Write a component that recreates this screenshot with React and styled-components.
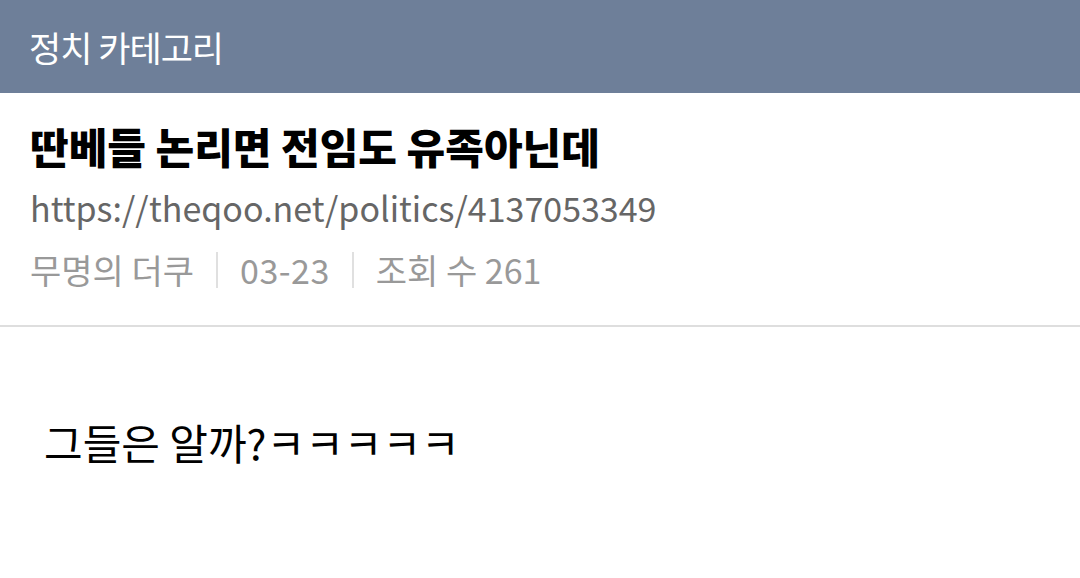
import React from "react";
import styled, { createGlobalStyle } from "styled-components";

const Global = createGlobalStyle`
  html, body { margin: 0; padding: 0; background: #fff; }
  body { font-family: "Noto Sans CJK KR", "Noto Sans", sans-serif; }
`;

const Page = styled.div`
  width: 1080px;
  min-height: 578px;
  background: #fff;
`;

const TopBar = styled.header`
  height: 93px;
  background: #6e7f99;
  display: flex;
  align-items: center;
  padding-left: 29px;
  box-sizing: border-box;
`;

const TopTitle = styled.h1`
  margin: 0;
  color: #fff;
  font-size: 35px;
  font-weight: 400;
  letter-spacing: -1px;
`;

const Head = styled.section`
  padding: 22px 30px 24px;
  border-bottom: 2px solid #dedede;
`;

const Title = styled.h2`
  margin: 0;
  font-size: 42px;
  font-weight: 900;
  color: #000;
  line-height: 62px;
`;

const Url = styled.div`
  font-size: 34px;
  color: #666;
  line-height: 62px;
`;

const Meta = styled.div`
  display: flex;
  align-items: center;
  font-size: 34px;
  color: #999;
  line-height: 62px;
`;

const MetaItem = styled.span`
  letter-spacing: ${(p) => (p.$num ? "0.5px" : "0")};
`;

const Sep = styled.span`
  width: 2px;
  height: 36px;
  background: #e0e0e0;
  margin: 0 22px;
`;

const Body = styled.article`
  padding: 84px 44px;
  font-size: 42px;
  color: #000;
`;

export default function App() {
  return (
    <Page>
      <Global />
      <TopBar>
        <TopTitle>정치 카테고리</TopTitle>
      </TopBar>
      <Head>
        <Title>딴베들 논리면 전임도 유족아닌데</Title>
        <Url>https://theqoo.net/politics/4137053349</Url>
        <Meta>
          <MetaItem>무명의 더쿠</MetaItem>
          <Sep />
          <MetaItem $num>03-23</MetaItem>
          <Sep />
          <MetaItem>조회 수 261</MetaItem>
        </Meta>
      </Head>
      <Body>그들은 알까?ㅋㅋㅋㅋㅋ</Body>
    </Page>
  );
}
